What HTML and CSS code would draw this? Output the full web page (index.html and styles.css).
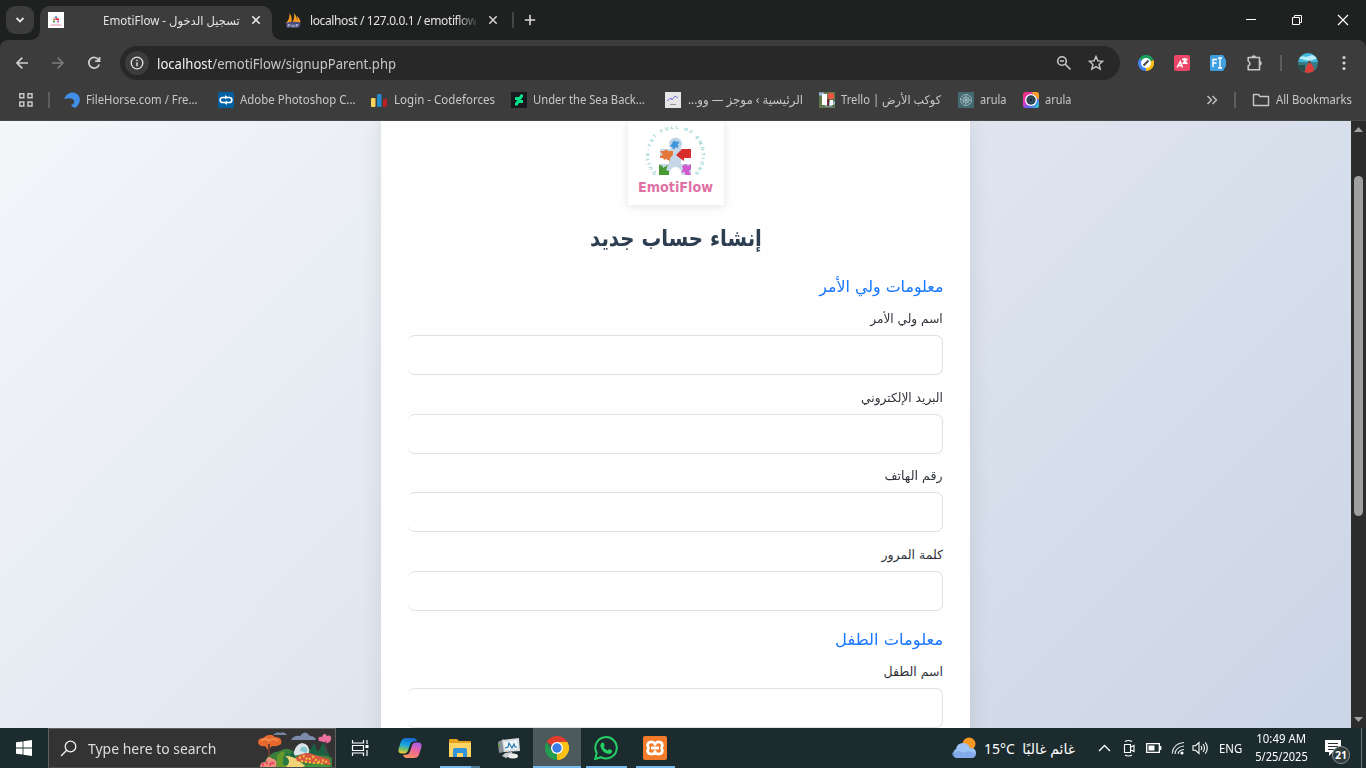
FILE: index.html
```html
<!DOCTYPE html>
<html lang="en">
<head>
<meta charset="utf-8">
<title>EmotiFlow</title>
<link rel="stylesheet" href="styles.css">
</head>
<body>
<div class="screen">
  <header class="tabstrip">
    <button class="tabsearch"><svg width="10" height="8" viewBox="0 0 10 8"><path d="M1.5 2 5 5.5 8.5 2" fill="none" stroke="#e3e3e3" stroke-width="1.8"/></svg></button>
    <div class="tab active">
      <svg class="fav" width="16" height="16" viewBox="0 0 16 16"><path fill="#fff" d="M0 0h16v16H0z"/><circle cx="8" cy="7" r="4.800" fill="none" stroke="#dff0f0" stroke-dasharray="1 1"/><circle cx="8" cy="5.300" r="1.200" fill="#5c9bd5"/><path fill="#d98a5c" d="M5 6.300h3V8H5z"/><path fill="#d33" d="M8 6.300h3V8H8z"/><path fill="#54945a" d="M5 8.500h2v2H5z"/><path fill="#bb64bd" d="M9 8.500h2v2H9z"/><path stroke="#e58bb1" d="M2.500 13h11"/></svg>
      <span class="tabtitle" dir="rtl"><span class="fit t1">تسجيل الدخول - EmotiFlow</span></span>
      <svg class="x" width="10" height="10" viewBox="0 0 10 10"><path d="m1.300 1.300 7.400 7.400m0-7.400L1.300 8.700" stroke="#e3e3e3" stroke-width="1.600"/></svg>
    </div>
    <div class="tab second">
      <svg width="16" height="16" viewBox="0 0 16 16"><path d="M1 11Q5 7 4.500 1 8 6 6 11zM6.500 11q3.500-4 2.500-10 4 5 3 10zm5.500-1q1-3-.2-6 4 3 3.500 7z" fill="#f79a1e"/><path d="M.5 11q8-2 15-.5l-1 5H2z" fill="#474b80"/><path d="M3 15.500v-3h2V14H3M7 15.500v-3m0 1.500h2M9 12.500v3m2 0v-3h2V14h-2" stroke="#c9cbe0" stroke-width=".7" fill="none"/></svg>
      <span class="tabtitle fade"><span class="fit t2">localhost / 127.0.0.1 / emotiflow</span></span>
      <svg class="x" width="10" height="10" viewBox="0 0 10 10"><path d="m1.300 1.300 7.400 7.400m0-7.400L1.300 8.700" stroke="#d5d5d5" stroke-width="1.500"/></svg>
    </div>
    <i class="tabsep"></i>
    <svg class="plus" width="12" height="12" viewBox="0 0 12 12"><path d="M6 .8v10.400M.8 6h10.400" stroke="#d9d9d9" stroke-width="1.600"/></svg>
    <div class="wincontrols">
      <svg width="12" height="12" viewBox="0 0 12 12"><path d="M1 5.500h10" stroke="#fff"/></svg>
      <svg width="12" height="12" viewBox="0 0 12 12"><path d="M1.500 3.500h7v7h-7zM3.500 3.500v-2h7v7h-2" fill="none" stroke="#fff"/></svg>
      <svg width="12" height="12" viewBox="0 0 12 12"><path d="m1 1 10 10M11 1 1 11" stroke="#fff" stroke-width="1.200"/></svg>
    </div>
  </header>

  <nav class="toolbar">
    <svg width="16" height="16" viewBox="0 0 16 16"><path d="M14 8H3m5.300-5.400L3 8l5.300 5.400" fill="none" stroke="#d0d0d0" stroke-width="1.700"/></svg>
    <svg width="16" height="16" viewBox="0 0 16 16"><path d="M2 8h11M7.700 2.600 13 8l-5.300 5.400" fill="none" stroke="#7c7c7c" stroke-width="1.500"/></svg>
    <svg width="16" height="16" viewBox="0 0 16 16"><path d="M12.700 5A5.300 5.300 0 1 0 13.200 9.400M13.500 2v4.200H9.200" fill="none" stroke="#d0d0d0" stroke-width="1.700"/></svg>
    <div class="omnibox">
      <span class="info"><svg width="14" height="14" viewBox="0 0 14 14"><circle cx="7" cy="7" r="5.800" fill="none" stroke="#e3e3e3" stroke-width="1.300"/><path d="M7 6.200v4M7 3.700v1.400" stroke="#e3e3e3" stroke-width="1.400"/></svg></span>
      <span class="url"><span class="fit t3"><b>localhost</b>/emotiFlow/signupParent.php</span></span>
      <svg class="mag" width="16" height="16" viewBox="0 0 16 16"><circle cx="6" cy="6" r="4.300" fill="none" stroke="#c7c7c7" stroke-width="1.600"/><path d="m9.200 9.200 5.300 5.300M4 6h4" stroke="#c7c7c7" stroke-width="1.600"/></svg>
      <svg width="16" height="16" viewBox="0 0 16 16"><path d="m8 1.500 1.900 4.400 4.800.4-3.600 3.100 1.100 4.700L8 11.600l-4.200 2.500 1.100-4.700L1.300 6.300l4.800-.4z" fill="none" stroke="#c7c7c7" stroke-width="1.400"/></svg>
    </div>
    <div class="ext">
      <svg width="16" height="16" viewBox="0 0 16 16"><path d="M8 8 1.100 4A8 8 0 0 1 15.500 5z" fill="#18a05e"/><path d="M8 8 15.500 5A8 8 0 0 1 8 16z" fill="#fabd12"/><path d="M8 8v8A8 8 0 0 1 1.100 4z" fill="#4285f4"/><circle cx="8" cy="8" r="5" fill="#fff"/><path d="m5.500 10.500 5-5" stroke="#444" stroke-width="2"/></svg>
      <svg width="16" height="16" viewBox="0 0 16 16"><rect width="16" height="16" rx="2" fill="#ee4668"/><path d="m3 12.500 3.300-6 2.200 6M4 10.500h4M8 4.300h5.500M10.500 3v1.300M12.500 4.500q-1 3-4 4m1-4q1 3 4 4" stroke="#fff" stroke-width="1.400" fill="none"/></svg>
      <svg width="16" height="16" viewBox="0 0 16 16"><path d="M1.500 0H13l3 5v6l-3 5H1.500Q0 16 0 14.500v-13Q0 0 1.500 0" fill="#3f9fe0"/><path d="M3 12V4.500h4M3 8h3.500M8 3h4M8 13h4M10 3v10" stroke="#fff" stroke-width="1.400" fill="none"/></svg>
      <svg width="18" height="18" viewBox="0 0 18 18"><path d="M2.200 3.500h11.300v12.300H2.200V12q3.500-2.200 0-5z" fill="none" stroke="#c7c7c7" stroke-width="1.600" stroke-linejoin="round"/><path d="M5.500 3.500a2.300 2.300 0 0 1 4.600 0zM13.500 7a2.300 2.300 0 0 1 0 4.600z" fill="#c7c7c7"/></svg>
      <i></i>
      <svg class="avatar" width="20" height="20" viewBox="0 0 20 20"><path fill="#40b9de" d="M0 0h20v9H0z"/><path d="M0 5q4-3 8-1l6-2 6 3-8 3-5-1z" fill="#b9ecf8"/><path fill="#397b84" d="M0 9h20v11H0z"/><path d="M0 12h7v8H0z" fill="#294d4a"/><path d="m6 20 3-8 3-3 3 4 2 7z" fill="#d83f39"/><circle cx="11.500" cy="9" r="1.500" fill="#705044"/></svg>
      <svg width="4" height="16" viewBox="0 0 4 16" fill="#d0d0d0"><circle cx="2" cy="2.500" r="1.600"/><circle cx="2" cy="8" r="1.600"/><circle cx="2" cy="13.500" r="1.600"/></svg>
    </div>
  </nav>

  <nav class="bookmarks">
    <svg class="apps" width="16" height="16" viewBox="0 0 16 16"><path d="M1.800 1.800h4v4h-4zM10 1.800h4v4h-4zM1.800 10h4v4h-4zM10 10h4v4h-4z" fill="none" stroke="#c7c7c7" stroke-width="1.500"/></svg>
    <i></i>
    <div class="marks">
      <a><svg width="16" height="16" viewBox="0 0 16 16"><path d="M0 7Q3 0 9 .5q5 .5 6.500 5Q17 12 11 16q-3-1-4-3 4-1 3-4Q9 5 0 7" fill="#3f8ee8"/></svg><span class="fit b1">FileHorse.com / Fre...</span></a>
      <a><svg width="16" height="16" viewBox="0 0 16 16"><rect width="16" height="16" rx="1.500" fill="#0361a3"/><rect x="2.200" y="5.500" width="11.600" height="5" rx="2.300" fill="none" stroke="#fff" stroke-width="1.700"/><path d="m7 3 2.800 2.300L7 7.500zM9 8.500v4.600L6.200 10.700z" fill="#fff"/></svg><span class="fit b2">Adobe Photoshop C...</span></a>
      <a class="wide"><svg width="16" height="16" viewBox="0 0 16 16"><rect y="6" width="4.500" height="9" rx="1" fill="#fbd35c"/><rect x="6" y="2" width="4.500" height="13" rx="1" fill="#2489cb"/><rect x="12" y="7" width="4" height="8" rx="1" fill="#b91f25"/></svg><span class="fit b3">Login - Codeforces</span></a>
      <a><svg width="16" height="16" viewBox="0 0 16 16"><path fill="#17191e" d="M0 0h16v16H0z"/><path d="M12 2.500v2.300L9.600 8H12v3H8l-1.500 2.500H4v-2.300L6.400 8H4V5h4l1.500-2.500z" fill="#05e389"/></svg><span class="fit b4">Under the Sea Back...</span></a>
      <a class="wide"><svg width="16" height="16" viewBox="0 0 16 16"><path fill="#e5e5e8" d="M0 0h16v16H0z"/><path d="m2 9 4-3 1 2 3-4 3 2" fill="none" stroke="#7474d8"/><path d="M5 12.500h6" stroke="#999"/></svg><span class="fit b5" dir="rtl">الرئيسية › موجز — وو...</span></a>
      <a><svg width="16" height="16" viewBox="0 0 16 16"><path fill="#60764d" d="M0 0h16v16H0z"/><path d="M0 2h5M6 13h7M10 11h6" stroke="#97b6d6" stroke-width="3"/><path d="M3 2h5v11H3z" fill="#fff"/><path d="M11 8h3v5h-3z" fill="#fff"/><circle cx="12" cy="4" r="3.300" fill="#ee5543"/><path d="M8 7h2v7H8z" fill="#742d34"/></svg><span class="fit b6" dir="rtl">كوكب الأرض | Trello</span></a>
      <a><svg width="16" height="16" viewBox="0 0 16 16"><path fill="#426a70" d="M0 0h16v16H0z"/><g fill="none" stroke="#b8cbd0"><circle cx="8" cy="8" r="5.500" stroke-dasharray="2 .8"/><circle cx="8" cy="8" r="3" stroke-dasharray="1.500 .7"/><path d="M3 8h10M8 3v10M4.500 4.500l7 7m0-7-7 7" stroke-width=".7"/></g></svg><span class="fit b7">arula</span></a>
      <a><svg width="16" height="16" viewBox="0 0 16 16"><defs><linearGradient id="rainbow" x2="1" y2="1"><stop stop-color="#f32b68"/><stop offset=".35" stop-color="#e935bd"/><stop offset=".65" stop-color="#5964fa"/><stop offset="1" stop-color="#26dbb7"/></linearGradient></defs><rect width="16" height="16" rx="2.500" fill="url(#rainbow)"/><path d="M8 0h5.500Q16 0 16 2.500V8z" fill="#f89d25"/><circle cx="8" cy="8" r="6" fill="#fff"/><circle cx="8" cy="8" r="4.700" fill="#28414e"/><circle cx="8" cy="8" r="2" fill="#182733" stroke="#5b7987" stroke-width=".6"/></svg><span class="fit b7">arula</span></a>
    </div>
    <div class="allmarks">
      <svg width="12" height="12" viewBox="0 0 12 12"><path d="m1.500 2 4 4-4 4m5-8 4 4-4 4" fill="none" stroke="#c7c7c7" stroke-width="1.400"/></svg>
      <i></i>
      <svg width="18" height="16" viewBox="0 0 18 16"><path d="M1.500 2.500h5l1.500 2h8.500v9h-15z" fill="none" stroke="#c7c7c7" stroke-width="1.400" stroke-linejoin="round"/></svg>
      <span class="fit b8">All Bookmarks</span>
    </div>
  </nav>

  <main class="viewport">
    <section class="page" dir="rtl">
      <form class="card">
        <div class="logo">
          <svg width="96" height="84" viewBox="0 0 96 84"><defs><path id="arc" d="M27.500 52A28 28 0 1 1 69 51"/></defs>
            <g direction="ltr" transform="translate(2.400 3.500) scale(.94)"><text class="ring" textLength="130"><textPath href="#arc">QUITE-YET FULL OF EMOTIONS</textPath></text></g>
            <circle cx="47.500" cy="23" r="6.500" fill="#c1d5e8"/><path d="M43.500 21q2 1 2-1 2-1 2 0 0 2 3 0l1 2q-3 1-1 3l-1 2q-2-2-3 1h-2q1-3-2-2v-2q3-1 1-3" fill="#4296dc"/>
            <path d="M32 28h31v9H53v6h10v11h-9q-1-8-6.500-8T41 54H31V43h10v-6h-9z" fill="#c6d8e8"/>
            <path d="M32 30h4q2-3 4 0h5v4l-3 3v3l-4-2-2 1-1-2h-3v-2l3-1z" fill="#e27839"/>
            <path d="m48 34 6-6h9v9h-7v3l-3-2z" fill="#d82c2d"/>
            <path d="M31 44q4 0 4 3l5-3-2 5 3 1v4H31z" fill="#479b32"/>
            <path d="m54 45 4-2 2 2 3-2v5l-2 2 2 4h-6v-3l-4 1 2-4z" fill="#cf5bd0"/>
            <text class="brand" x="10" y="70.500" direction="ltr" textLength="75" lengthAdjust="spacingAndGlyphs">EmotiFlow</text></svg>
        </div>
        <h1><span class="fit p1">إنشاء حساب جديد</span></h1>
        <h2><span class="fit p2">معلومات ولي الأمر</span></h2>
        <div class="field"><label><span class="fit p3">اسم ولي الأمر</span></label><input type="text"></div>
        <div class="field"><label><span class="fit p4">البريد الإلكتروني</span></label><input type="text"></div>
        <div class="field"><label><span class="fit p5">رقم الهاتف</span></label><input type="text"></div>
        <div class="field"><label><span class="fit p6">كلمة المرور</span></label><input type="text"></div>
        <h2 class="child"><span class="fit p7">معلومات الطفل</span></h2>
        <div class="field"><label><span class="fit p8">اسم الطفل</span></label><input type="text"></div>
      </form>
    </section>
    <aside class="scrollbar">
      <svg width="9" height="5" viewBox="0 0 9 5"><path d="M0 5 4.500 0 9 5z" fill="#9f9f9f"/></svg>
      <div class="thumb"></div>
      <svg class="down" width="9" height="5" viewBox="0 0 9 5"><path d="m0 0 4.500 5L9 0z" fill="#9f9f9f"/></svg>
    </aside>
  </main>

  <footer class="taskbar">
    <div class="start"><svg width="16" height="16" viewBox="0 0 16 16" fill="#fff"><path d="m0 2.300 6.600-.9v6.200H0zM7.400 1.300 16 0v7.600H7.400zM0 8.400h6.600v6.200L0 13.700zM7.400 8.400H16V16l-8.600-1.200z"/></svg></div>
    <div class="search">
      <svg width="17" height="17" viewBox="0 0 17 17"><circle cx="10.500" cy="6.500" r="5.300" fill="none" stroke="#f1f1f1" stroke-width="1.300"/><path d="M6.700 10.300 1 16" stroke="#f1f1f1" stroke-width="1.300"/></svg>
      <span class="fit k1">Type here to search</span>
      <svg class="scene" width="76" height="37" viewBox="0 0 76 37">
        <path d="M15 4q4-4 7-2 4-2 7 2z" fill="#74859c"/><path d="M33 9q3-5 9-4 5-7 10 0 5 0 6 4z" fill="#7d8baa"/>
        <path d="M4 37q5-16 18-17 7-5 14 1 15-8 38 6v10z" fill="#39803c"/><path d="M35 25q2-12 9-13 8 1 7 10z" fill="#dce3e7"/><path d="M42 20q0-5 6-4 2 3 1 6z" fill="#83c9d2"/><path d="M19 37V25q6-9 10 0v12z" fill="#65992c"/><path d="M25 29q3-16 8 0v5h-8z" fill="#287844"/><path d="M32 25q2-8 5 0v9h-5zM50 24l6-12 5 12zM59 24l6-13 7 14z" fill="#1a6043"/>
        <path d="M0 12q0-5 5-5 7-6 12-1 8 0 6 7-4 3-9 2l-4 4-3-4q-5 1-7-3z" fill="#e6682d"/><path d="M3 10q5-4 8 0 4-4 9 0" fill="none" stroke="#f59351" stroke-width="1.500"/><path d="M11 13v12" stroke="#693c2c" stroke-width="2"/>
        <path d="M27 37q8-7 0-12 9 0 14 5l9 7z" fill="#f0d477"/><path d="M61 10q-2-5 3-4 2-6 5-1 5-2 4 4-2 5-7 2z" fill="#ec709e"/>
        <path d="M68 10v14" stroke="#733858"/><path d="M38 27q9-8 19-3l14 4 2 6q-18-1-34-4z" fill="#d95642"/><path d="m41 27 5-2 4 4 5-3 5 5 6-2 5 4M43 30l6 1 8 1 10 1" fill="none" stroke="#f3c33b" stroke-width="2.200" stroke-dasharray="2 2"/>
        <path d="M2 37q0-7 6-6 1-8 7-3 5 0 3 9z" fill="#e99378"/><path d="m4 34 5-2 5 2 2-5" fill="none" stroke="#eb426d" stroke-width="3" stroke-dasharray="2 2"/><path d="M43 37q10-7 30-2v2z" fill="#3f963b"/>
      </svg>
    </div>
    <div class="apps-row">
      <div class="app"><svg width="18" height="18" viewBox="0 0 18 18"><path d="M1.500 1v3h11V1M1.500 17v-3h11v3M1.500 6.500h11v5h-11zM16 1v4m0 6v6" fill="none" stroke="#fff" stroke-width="1.200"/><path fill="#fff" d="M14.500 6h3v3h-3z"/></svg></div>
      <div class="app"><svg width="24" height="22" viewBox="0 0 24 22"><defs><linearGradient id="cool" x1=".5" x2=".3" y2="1"><stop stop-color="#1868cf"/><stop offset=".45" stop-color="#16a8e5"/><stop offset=".75" stop-color="#79bd68"/><stop offset="1" stop-color="#f2ce36"/></linearGradient><linearGradient id="warm" x1=".7" x2=".3" y2="1"><stop stop-color="#ad60ed"/><stop offset=".5" stop-color="#f06698"/><stop offset="1" stop-color="#f99458"/></linearGradient></defs><path d="M8 1h8q2 0 3 3l-4 .5q-2 0-3 3l-2 6q-1 3-4 3H4q-5 0-3-6l2-6q1-3.500 5-3.500" fill="url(#cool)"/><path d="M16 21H8q-2 0-3-3l4-.5q2 0 3-3l2-6q1-3 4-3h2q5 0 3 6l-2 6q-1 3.500-5 3.500" fill="url(#warm)"/></svg></div>
      <div class="app open files"><svg width="22" height="20" viewBox="0 0 22 20"><path d="M0 2Q0 1 1 1h7l2 2h11q1 0 1 1v15H0z" fill="#e6a41d"/><path d="M0 5h22v14H0z" fill="#ffd366"/><path d="M4 19v-7q0-2 2-2h10q2 0 2 2v7h-4v-4H8v4z" fill="#3295dc"/></svg></div>
      <div class="app"><svg width="24" height="22" viewBox="0 0 24 22"><path d="M1 5 7 2v13l-5 1z" fill="#8b9297"/><path d="m5 3 17-2 1 13-16 1z" fill="#d9dcdf"/><path d="m7 5 13-2 1 9-13 1z" fill="#eef8fb"/><path d="m8 11 3-1 1-4 3 5 2-4 1 3 2 0" fill="none" stroke="#2977ad" stroke-width="1.200"/><path d="m8 16 7-1 1 3-7 3-4-2z" fill="#c8cccf"/><ellipse cx="16" cy="19" rx="5" ry="2.500" fill="#eee"/><path fill="#65a64b" d="M1 7h2v2H1z"/></svg></div>
      <div class="app open current"><svg width="24" height="24" viewBox="0 0 24 24"><path d="M12 12 1.600 6A12 12 0 0 1 22.400 6z" fill="#e33b2e"/><path d="M12 6h10.400A12 12 0 0 1 12 24l5.200-9z" fill="#fbc116"/><path d="M1.600 6 6.800 15l5.200 3v6A12 12 0 0 1 1.600 6" fill="#229b4e"/><path d="m12 24 5.200-9H12z" fill="#fbc116"/><circle cx="12" cy="12" r="6" fill="#fff"/><circle cx="12" cy="12" r="4.700" fill="#397de9"/></svg></div>
      <div class="app open"><svg width="24" height="24" viewBox="0 0 24 24"><path d="m1.200 23 1.500-6a10.700 10.700 0 1 1 4.200 4.200z" fill="none" stroke="#25cf65" stroke-width="2"/><path d="M8 6.500h1.500l1.200 3-1 1.500q1 2.500 4 3.500l1.500-1.500 3 1.500q0 3-3 3.500Q8 17 6.300 10 6.500 7 8 6.500" fill="#25cf65"/></svg></div>
      <div class="app open"><svg width="24" height="24" viewBox="0 0 24 24"><rect width="24" height="24" rx="2" fill="#f27a28"/><path d="M6.500 6.300q4.500-1.300 5.500 2.200 1-3.500 5.500-2.200 3 1.500 1 5.700 2 4.200-1 5.700-4.500 1.300-5.500-2.200-1 3.500-5.500 2.200-3-1.500-1-5.700-2-4.200 1-5.700zM8 12h8" fill="none" stroke="#fff" stroke-width="2.800" stroke-linejoin="round"/></svg></div>
    </div>
    <div class="tray">
      <svg class="weather" width="26" height="22" viewBox="0 0 26 22"><circle cx="18" cy="7" r="6.500" fill="#f69825"/><path d="M5 21a5 5 0 0 1 0-9q1-6 7-6 5 0 7 5 6 0 6 5 0 5-5 5z" fill="#9bc3f5"/><path d="M1 16q5-4 11 0 7-4 13 1-1 4-5 4H5q-4-1-4-5" fill="#779ee7" opacity=".65"/></svg>
      <span class="temp"><span class="fit k2">15°C</span></span>
      <span class="cond" dir="rtl"><span class="fit k3">غائم غالبًا</span></span>
      <svg class="up" width="13" height="8" viewBox="0 0 13 8"><path d="m1 7 5.500-5.500L12 7" fill="none" stroke="#fff" stroke-width="1.400"/></svg>
      <svg class="cam" width="12" height="18" viewBox="0 0 12 18"><path d="M1.500 5.500h6v8h-6zM8 8l3-1.500v6L8 11M2 2.500q3.500-2 7 0M2 16q3.500 2 7 0" fill="none" stroke="#fff" stroke-width="1.100"/></svg>
      <svg class="bat" width="16" height="12" viewBox="0 0 16 12"><path d="M.7 1.700h12.600v8.600H.7zM14.700 4v4" fill="none" stroke="#fff" stroke-width="1.300"/><path fill="#fff" d="M2.500 3.500h6v5h-6z"/></svg>
      <svg class="wifi" width="14" height="14" viewBox="0 0 14 14"><path d="M1.200 12.500Q2 2.500 13 1.500M4 13q.5-7 9-8M7 13q.5-4 6-4.500" fill="none" stroke="#e1e5e5" stroke-width="1.200"/><circle cx="11" cy="12" r="1.600" fill="#fff"/></svg>
      <svg class="vol" width="17" height="14" viewBox="0 0 17 14"><path d="M1 4.700h2.500L7 1.500v11L3.500 9.300H1zM9 5q1.500 2 0 4m2-6q3 4 0 8m2.300-9.700q4 5.700 0 11.400" fill="none" stroke="#fff" stroke-width="1.100"/></svg>
      <span class="lang"><span class="fit k4">ENG</span></span>
      <span class="clock"><span class="fit k5">10:49 AM</span><span class="fit k6">5/25/2025</span></span>
      <span class="notice"><svg width="16" height="16" viewBox="0 0 16 16"><path d="M0 0h16v12H8l-4 4v-4H0z" fill="#fff"/><path d="M3 3.500h10M3 6.500h10M3 9.500h6" stroke="#253333"/></svg><em>21</em></span>
    </div>
  </footer>
</div>
</body>
</html>
```
FILE: styles.css
```css
*{box-sizing:border-box}
body{margin:0;font-family:"Noto Sans","DejaVu Sans",sans-serif;font-size:12px;overflow:hidden}
svg{display:block;flex:none}
.screen{width:1366px;height:768px;display:grid;grid-template-rows:40px 46px 35px 607px 40px;background:#1f2120}

/* Horizontal condensing of labels */
.fit{display:inline-block;white-space:nowrap;transform-origin:0 50%}
[dir="rtl"] .fit,.fit[dir="rtl"]{transform-origin:100% 50%}
.t1{transform:scaleX(.965)}
.t2{letter-spacing:-.38px}
.t3{transform:scaleX(.935)}
.b1{transform:scaleX(.943)}
.b2{transform:scaleX(.953)}
.b3{transform:scaleX(.963)}
.b4{transform:scaleX(.935)}
.b5{transform:scaleX(.98);width:115px}
.b6{transform:scaleX(.936);width:100px}
.b7{transform:scaleX(.91)}
.b8{transform:scaleX(.94)}
[dir="rtl"] .p1{transform:scaleX(.86);transform-origin:50% 50%}
.p2{transform:scaleX(.99)}
.p3{transform:scaleX(.97)}
.p4{transform:scaleX(.975)}
.p5{transform:scaleX(1.01)}
.p7{transform:scaleX(1.018)}
.k1{transform:scaleX(.93)}
.k4{transform:scaleX(.95)}
.k5{transform:scaleX(.95);transform-origin:50% 50%}
.k6{transform:scaleX(.92);transform-origin:50% 50%}

.tabstrip{display:flex;align-items:center;background:#1f2120;color:#e3e3e3;padding-left:6px}
.tabsearch{width:28px;height:28px;border:0;border-radius:9px;background:#3c3c3c;display:grid;place-items:center;padding:0;margin-right:6px}
.tab{height:34px;display:flex;align-items:center}
.tab.active{width:232px;align-self:flex-end;background:#3c3c3c;border-radius:10px 10px 0 0;padding:0 11px 6px 8px;position:relative}
.tab.active:before,.tab.active:after{content:"";position:absolute;bottom:0;width:9px;height:9px}
.tab.active:before{left:-9px;background:radial-gradient(circle at 0 0,transparent 8.5px,#3c3c3c 9px)}
.tab.active:after{right:-9px;background:radial-gradient(circle at 100% 0,transparent 8.5px,#3c3c3c 9px)}
.tabtitle{white-space:nowrap}
.tab.active .tabtitle{width:176px;margin-right:11px}
.tab.second{width:213px;margin-left:13px}
.tab.second .tabtitle{width:168px;margin:0 12px 0 9px;overflow:hidden}
.fade{-webkit-mask-image:linear-gradient(90deg,#000 88%,rgba(0,0,0,.15));mask-image:linear-gradient(90deg,#000 88%,rgba(0,0,0,.15))}
.tabsep{width:2px;height:16px;background:#454746;margin-left:14px}
.plus{margin-left:10px}
.wincontrols{margin-left:auto;display:flex;gap:34px;padding-right:17px}

.toolbar{display:flex;align-items:center;padding-left:14px;gap:20px;background:#3c3c3c;border-radius:8px 8px 0 0}
.omnibox{width:1000px;height:34px;margin-left:-2px;border-radius:17px;background:#282828;display:flex;align-items:center;padding:0 16px 0 5px;color:#c7c7c7;font-size:14px}
.info{width:24px;height:24px;border-radius:50%;background:#3c3c3c;display:grid;place-items:center}
.url{margin-left:8px;flex:1}
.url b{font-weight:400;color:#f1f1f1}
.mag{margin-right:16px}
.ext{display:flex;align-items:center;gap:20px;margin-left:-2px}
.ext i{width:2px;height:16px;background:#5d5d5d;margin:0 -1px 0 -4px}
.avatar{border-radius:50%;margin:0 4px 0 -3px}

.bookmarks{display:flex;align-items:center;padding:0 14px 7px 18px;background:#3c3c3c;border-bottom:1px solid #474747;color:#c7c7c7}
.bookmarks i{width:2px;height:16px;background:#5d5d5d}
.apps{margin-right:14px}
.marks{display:grid;grid-template-columns:154px 153px 140px 154px 154px 139px 65px 60px;margin-left:14px}
.marks a{display:flex;align-items:center;gap:6px;height:20px}
.marks .wide{gap:7px}
.allmarks{margin-left:auto;display:flex;align-items:center}
.allmarks i{margin:0 16px}
.allmarks span{margin-left:6px;width:76px}

.viewport{display:grid;grid-template-columns:1351px 15px;overflow:hidden}
.page{height:607px;overflow:hidden;background:linear-gradient(135deg,#f5f7fa,#c3cfe2) 0 -68px/1351px 1023px;padding-left:381px;direction:ltr}
.card{width:589px;height:640px;padding:0 27px;background:#fefefe;box-shadow:0 0 20px rgba(0,0,0,.1);direction:rtl}
.logo{width:96px;height:84px;margin:0 auto 14px;background:#fff;box-shadow:0 2px 8px rgba(0,0,0,.1)}
.brand{font:700 14px "DejaVu Sans",sans-serif;fill:#e071a5}
.ring{font:700 5px "Liberation Sans",sans-serif;fill:#8bcdcc}
h1{margin:0 0 14px;font:700 23px/38px "DejaVu Sans",sans-serif;height:40px;color:#2c3e50;text-align:center}
h2{margin:0 0 8px;font:400 16px/28px "DejaVu Sans",sans-serif;color:#1877ff}
h2.child{padding-top:3px}
.field{margin-bottom:12.6px}
label{display:block;height:20px;margin-bottom:6px;font:12.5px/20px "DejaVu Sans",sans-serif;color:#30343a}
input{display:block;width:535px;height:40px;margin:0;border:1px solid #dee0e2;border-left:0;border-radius:7px;background:#fff}
.scrollbar{background:#2c2c2c;display:flex;flex-direction:column;align-items:center;padding:6px 0}
.thumb{width:9px;height:340px;border-radius:5px;background:#9f9f9f;margin-top:44px}
.down{margin-top:auto}

.taskbar{display:flex;background:#1c2b2d;color:#fff}
.start{width:48px;display:grid;place-items:center}
.search{width:288px;border:1px solid #616161;border-bottom-color:#4b4b4b;background:#333;display:flex;align-items:center;padding-left:11px;color:#dedede;font-size:15px;overflow:hidden}
.search .fit{width:161px;margin-left:11px}
.scene{margin:3px 0 0 9px}
.apps-row{display:grid;grid-template-columns:50px 50px 49px 49px 48px 50px 48px;margin-left:-1px}
.app{display:grid;place-items:center;position:relative}
.open:after{content:"";position:absolute;left:5px;right:4px;bottom:0;height:2px;background:#76b9ed}
.files:after{background:linear-gradient(90deg,#76b9ed 31px,#4d7a97 31px)}
.current{background:#4d5a5b}
.current:after{left:0;right:0}
.tray{margin-left:auto;display:flex;align-items:center;width:415px;font-size:14px}
.temp{width:31px;margin-left:7px}
.cond{width:53px;margin-left:7px}
.up{margin-left:23px}
.cam{margin-left:12px}
.bat{margin-left:11px}
.wifi{margin-left:9px}
.vol{margin-left:7px}
.lang{width:24px;margin-left:10px;font-size:12px}
.clock{width:52px;margin-left:12px;font-size:12px;line-height:18px;display:flex;flex-direction:column;align-items:center}
.notice{margin-left:18px;padding-right:20px;border-right:1px solid #6c7778;height:40px;display:flex;align-items:center;position:relative}
.notice em{position:absolute;left:7px;top:18px;width:18px;height:18px;border:1px solid #8b9494;border-radius:50%;background:#303b3d;font:700 10.5px/16px "Open Sans",sans-serif;text-align:center}
```
